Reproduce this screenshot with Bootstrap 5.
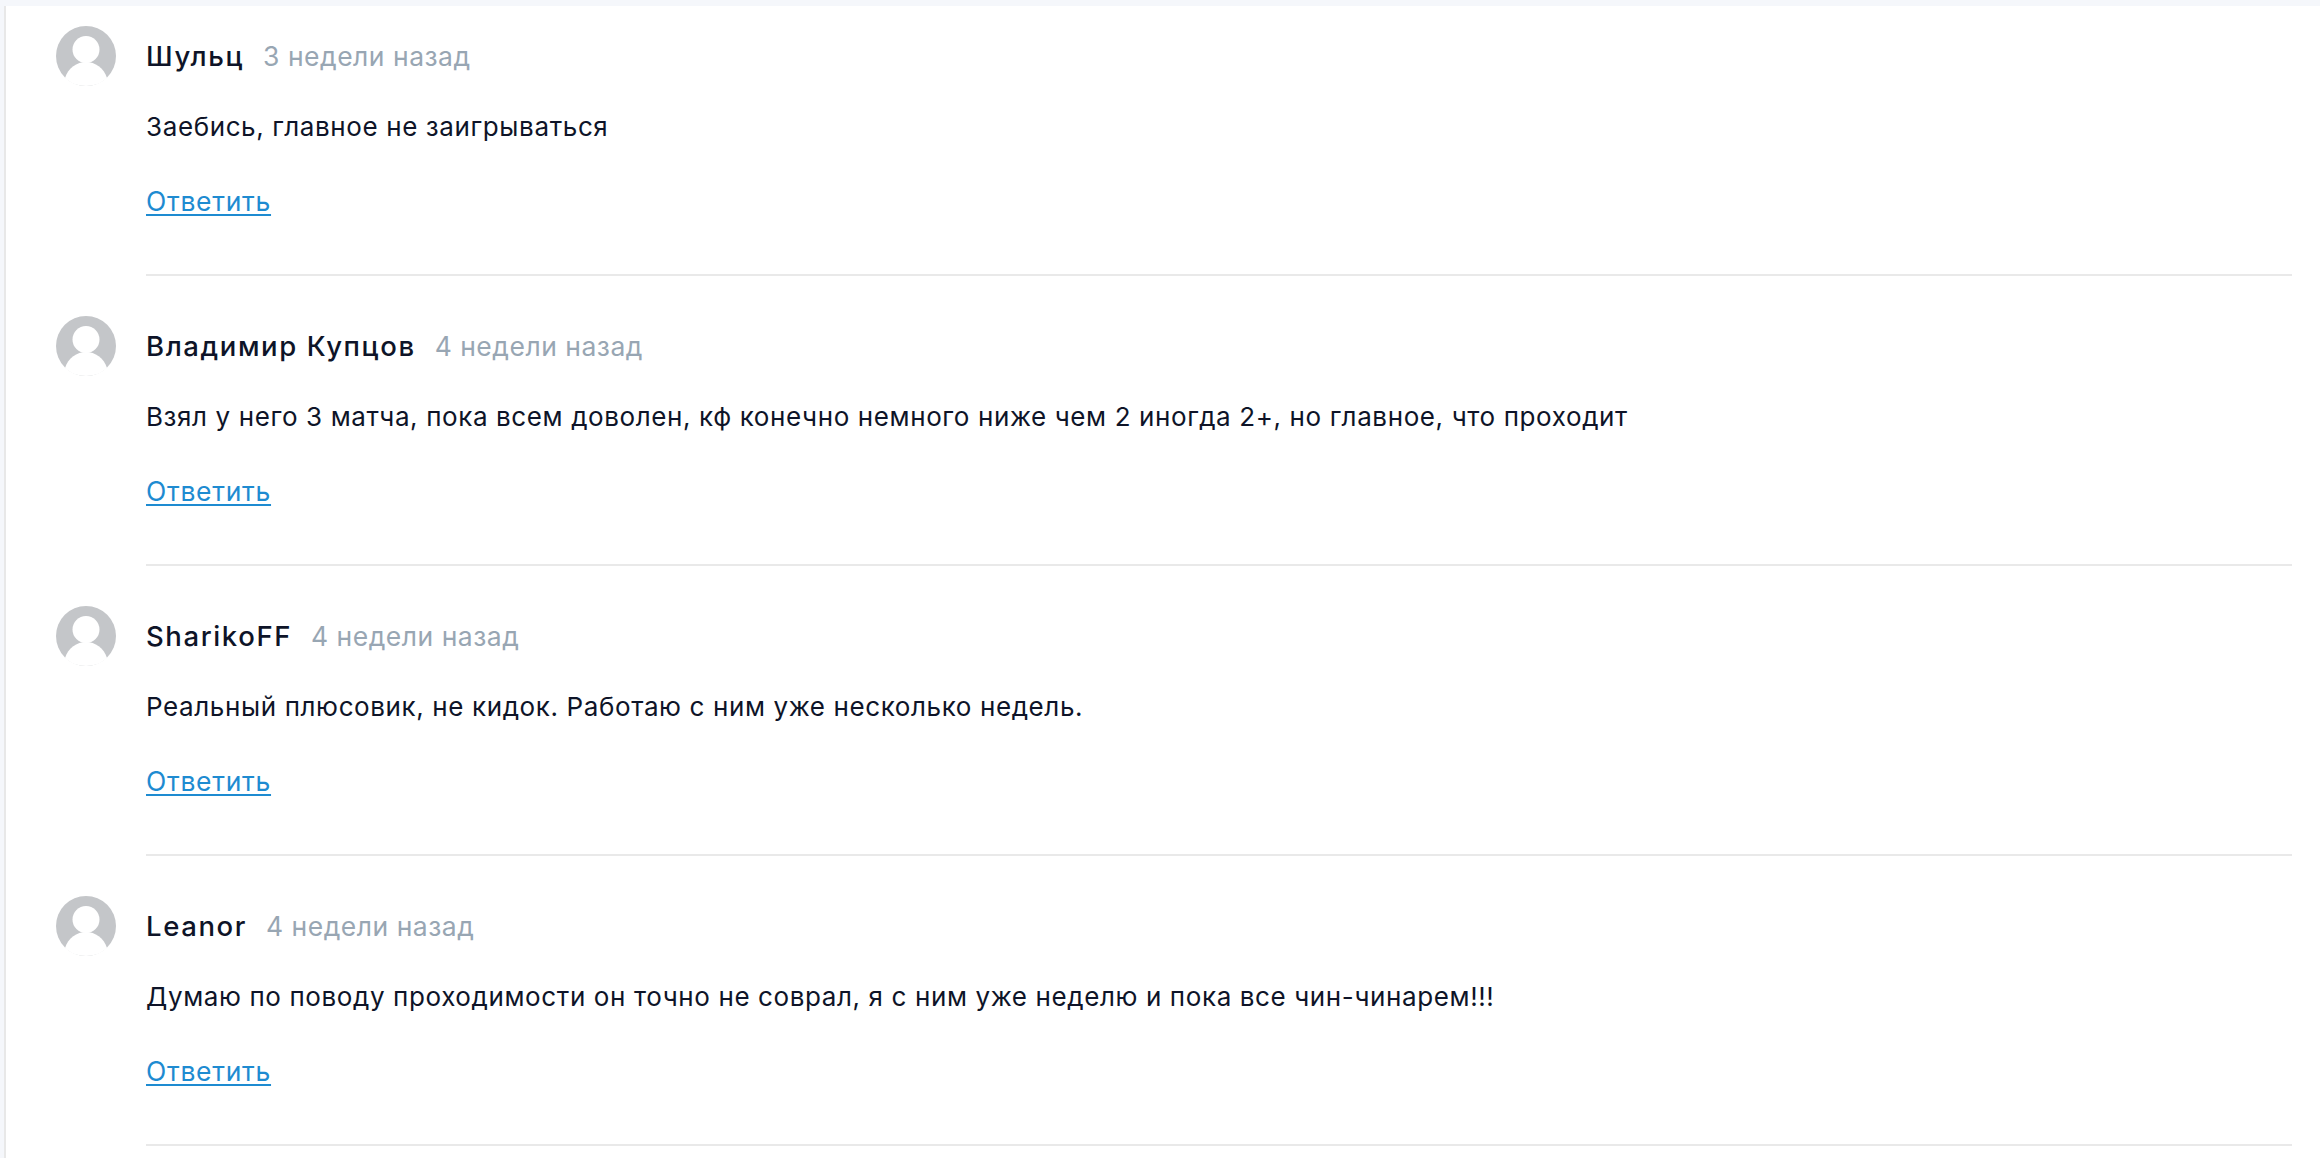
<!DOCTYPE html>
<html lang="ru"><head><meta charset="utf-8"><title>Комментарии</title>
<link href="https://cdn.jsdelivr.net/npm/bootstrap@5.3.0/dist/css/bootstrap.min.css" rel="stylesheet">
<style>
html,body{height:100%;overflow:hidden}
body{background:#f5f7fb;font-family:Inter,"Open Sans",sans-serif;color:#0e1428}
.sheet{margin-top:6px;margin-left:4px;border-left:2px solid #e8e8e8;background:#fff;height:1152px;padding:20px 28px 0 50px}
.entry{height:290px}
.pic{width:60px;height:60px;flex:none;margin-right:30px}
.body-col{flex:1;min-width:0;height:250px;border-bottom:2px solid #e9e9e9;margin-bottom:40px}
.head{height:60px;font-size:27.5px;line-height:60px}
.who{font-weight:500;letter-spacing:1.6px;margin-right:19px}
.when{font-size:26.5px;color:#98a6b3;letter-spacing:.5px}
.msg{font-size:26px;line-height:40px;margin:21px 0 34px;letter-spacing:.61px}
.reply{display:block;font-size:26.5px;line-height:40px;color:#1e8bd1;text-decoration:underline;text-decoration-thickness:2px;text-underline-offset:3px;letter-spacing:.7px}
</style></head><body>
<main class="sheet">
<article class="entry d-flex">
<svg class="pic" viewBox="0 0 60 60"><circle cx="30" cy="30" r="30" fill="#c4c6c9"/><circle cx="30" cy="23.5" r="13.5" fill="#fff"/><path d="M9 52C12 42 21 36 30 36s18 6 21 16c-5 5-13 8-21 8s-16-3-21-8z" fill="#fff"/></svg>
<div class="body-col"><div class="head"><span class="who">Шульц</span><span class="when">3 недели назад</span></div><p class="msg">Заебись, главное не заигрываться</p><a class="reply" href="#">Ответить</a></div>
</article>
<article class="entry d-flex">
<svg class="pic" viewBox="0 0 60 60"><circle cx="30" cy="30" r="30" fill="#c4c6c9"/><circle cx="30" cy="23.5" r="13.5" fill="#fff"/><path d="M9 52C12 42 21 36 30 36s18 6 21 16c-5 5-13 8-21 8s-16-3-21-8z" fill="#fff"/></svg>
<div class="body-col"><div class="head"><span class="who">Владимир Купцов</span><span class="when">4 недели назад</span></div><p class="msg">Взял у него 3 матча, пока всем доволен, кф конечно немного ниже чем 2 иногда 2+, но главное, что проходит</p><a class="reply" href="#">Ответить</a></div>
</article>
<article class="entry d-flex">
<svg class="pic" viewBox="0 0 60 60"><circle cx="30" cy="30" r="30" fill="#c4c6c9"/><circle cx="30" cy="23.5" r="13.5" fill="#fff"/><path d="M9 52C12 42 21 36 30 36s18 6 21 16c-5 5-13 8-21 8s-16-3-21-8z" fill="#fff"/></svg>
<div class="body-col"><div class="head"><span class="who">SharikoFF</span><span class="when">4 недели назад</span></div><p class="msg">Реальный плюсовик, не кидок. Работаю с ним уже несколько недель.</p><a class="reply" href="#">Ответить</a></div>
</article>
<article class="entry d-flex">
<svg class="pic" viewBox="0 0 60 60"><circle cx="30" cy="30" r="30" fill="#c4c6c9"/><circle cx="30" cy="23.5" r="13.5" fill="#fff"/><path d="M9 52C12 42 21 36 30 36s18 6 21 16c-5 5-13 8-21 8s-16-3-21-8z" fill="#fff"/></svg>
<div class="body-col"><div class="head"><span class="who">Leanor</span><span class="when">4 недели назад</span></div><p class="msg">Думаю по поводу проходимости он точно не соврал, я с ним уже неделю и пока все чин-чинарем!!!</p><a class="reply" href="#">Ответить</a></div>
</article>
</main>
<script src="https://cdn.jsdelivr.net/npm/bootstrap@5.3.0/dist/js/bootstrap.bundle.min.js"></script>
</body></html>
